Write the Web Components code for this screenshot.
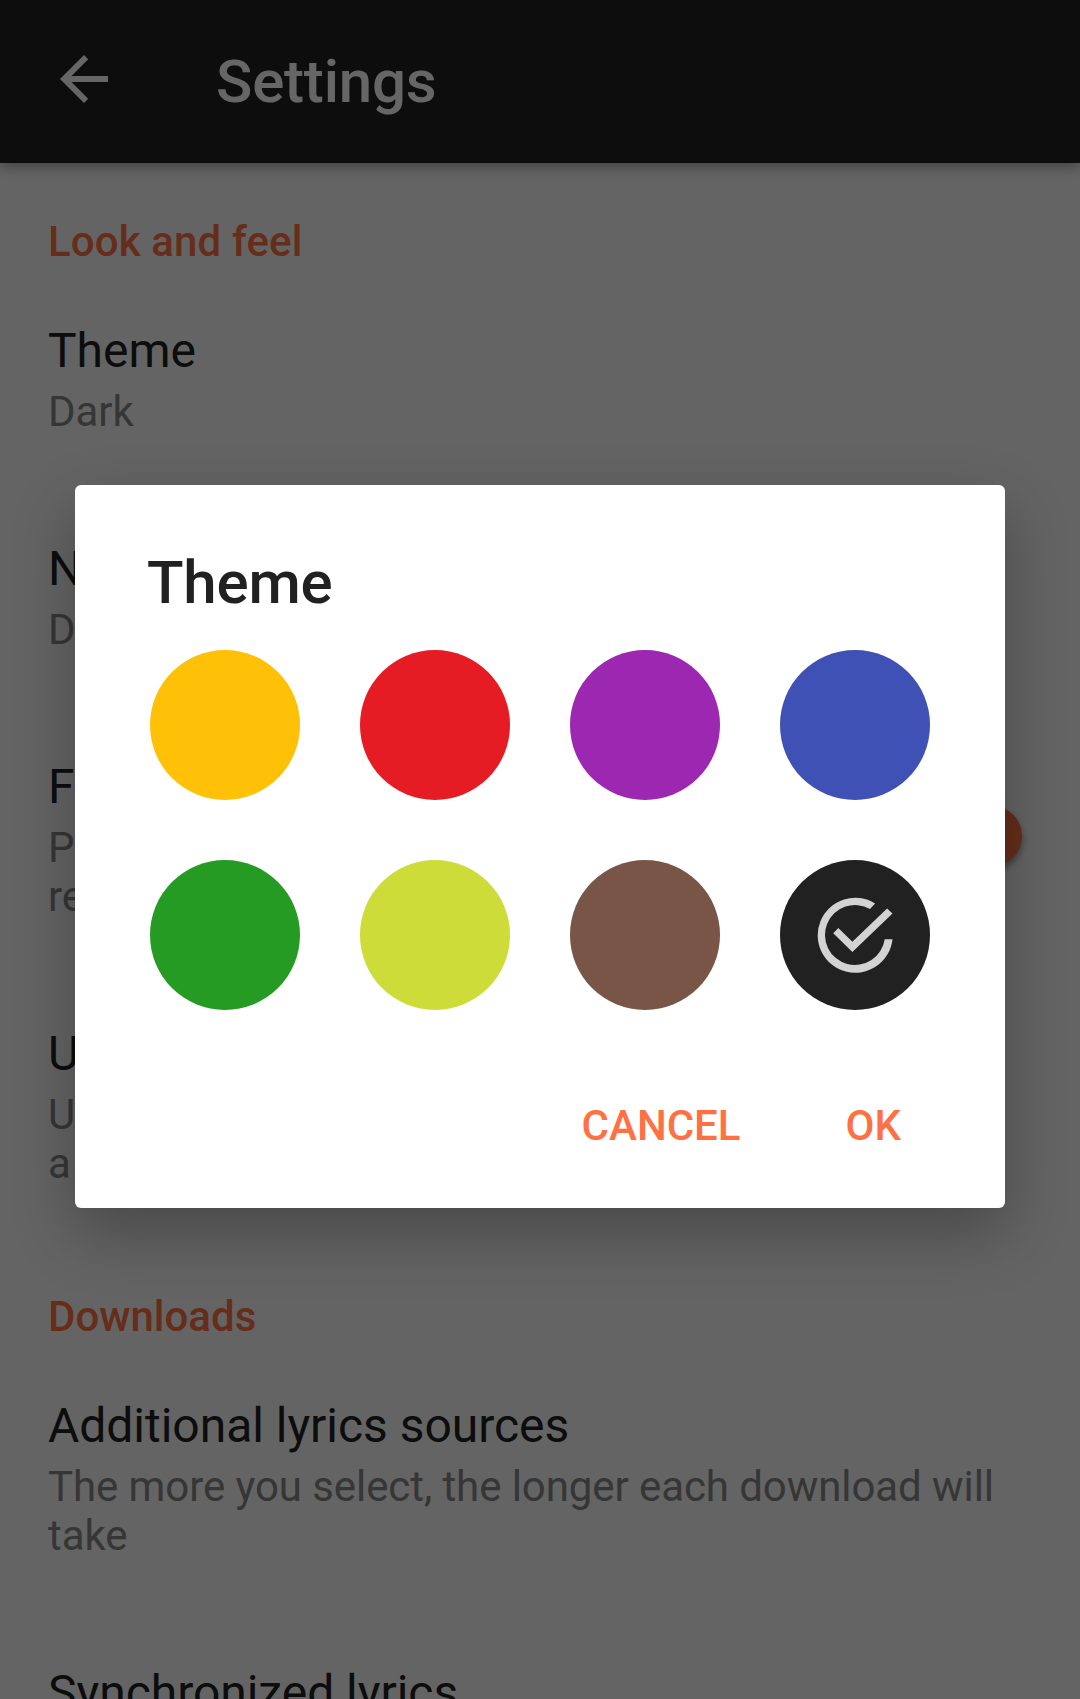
<!DOCTYPE html>
<html lang="en">
<head>
<meta charset="utf-8">
<title>Settings</title>
<style>
html,body{margin:0;height:1699px;overflow:hidden;background:#fafafa}
body{font-family:Roboto,"Noto Sans",sans-serif}
</style>
</head>
<body>
<settings-screen></settings-screen>
<script>
function define(name, html, setup) {
  customElements.define(name, class extends HTMLElement {
    constructor() {
      super();
      this.attachShadow({mode: 'open'}).innerHTML = html;
    }
    connectedCallback() { if (setup) setup(this, this.shadowRoot); }
  });
}

define('app-bar', `
<style>
:host{display:flex;align-items:center;box-sizing:border-box;height:163px;padding:0 48px;background:#212121;color:#fff;box-shadow:0 4px 13px rgba(0,0,0,.34);position:relative}
svg{width:72px;height:72px;margin-top:-5px;fill:#fff}
h1{margin:0 0 0 96px;font-size:60px;line-height:70px;font-weight:500;letter-spacing:-.2px}
</style>
<svg viewBox="0 0 24 24"><path d="M20 11H7.83l5.59-5.59L12 4l-8 8 8 8 1.41-1.41L7.83 13H20v-2z"/></svg>
<h1><slot></slot></h1>`);

define('section-title', `
<style>
:host{display:block;padding:52px 48px 4px;font-size:42px;line-height:49px;font-weight:500;color:#ff7043}
</style><slot></slot>`);

define('toggle-switch', `
<style>
:host{display:flex;align-items:center;justify-content:flex-end;width:102px;height:60px}
i{width:60px;height:60px;border-radius:50%;background:#ff7043;box-shadow:0 4px 7px rgba(0,0,0,.4)}
</style><i></i>`);

define('setting-item', `
<style>
:host{display:flex;align-items:center;padding:52px 40px 52px 48px}
.text{flex:1;min-width:0}
.title{font-size:48px;line-height:58px;color:#212121;white-space:nowrap;letter-spacing:-.03px}
.summary{display:block;margin-top:7px;font-size:42px;line-height:49px;color:#878787;letter-spacing:-.08px}
</style>
<div class="text"><div class="title"><slot></slot></div><div class="summary"><slot name="summary"></slot></div></div>
<slot name="widget"></slot>`);

define('color-swatch', `
<style>
:host{display:flex;align-items:center;justify-content:center;width:150px;height:150px;border-radius:50%;background:var(--c)}
svg{display:none;width:90px;height:90px;fill:#d3d3d3}
:host([selected]) svg{display:block}
</style>
<svg viewBox="0 0 24 24"><path d="M22 13.1A10 10 0 1 1 17.35 3.6L16 5.07A8 8 0 1 0 19.92 13.1ZM7.55 10.1 6.2 11.5 11.3 16.55 22 6.25 20.55 4.9 11.3 13.8Z"/></svg>`,
(el) => el.style.setProperty('--c', el.getAttribute('color')));

define('text-button', `
<style>
:host{display:block;font-size:42px;line-height:49px;font-weight:500;color:#ff7043}
</style><slot></slot>`);

define('color-dialog', `
<style>
:host{display:block;box-sizing:border-box;width:930px;height:723px;padding:66px 75px 0;border-radius:6px;background:#fff;box-shadow:0 25px 62px rgba(0,0,0,.28)}
h2{margin:0 0 0 -3px;font-size:60px;line-height:64px;height:99px;font-weight:500;color:#212121;letter-spacing:-.2px}
.grid{display:grid;grid-template-columns:repeat(4,150px);gap:60px}
.actions{display:flex;justify-content:flex-end;gap:105px;padding:91px 29px 0 0}
</style>
<h2><slot name="title"></slot></h2>
<div class="grid"><slot></slot></div>
<div class="actions"><slot name="actions"></slot></div>`);

define('settings-screen', `
<style>
:host{display:block;position:relative;width:1080px;height:1699px;overflow:hidden;background:#fafafa}
main{padding-top:2px}
.loose{letter-spacing:.13px}
toggle-switch{margin:0 18px 7px 0}
.scrim{position:absolute;inset:0;box-sizing:border-box;display:flex;justify-content:center;align-items:flex-start;padding-top:485px;background:rgba(0,0,0,.6)}
</style>
<app-bar>Settings</app-bar>
<main>
<section-title class="loose">Look and feel</section-title>
<setting-item>Theme<span slot="summary">Dark</span></setting-item>
<setting-item>N<span slot="summary">D</span></setting-item>
<setting-item>F<span slot="summary">P<br>re</span><toggle-switch slot="widget"></toggle-switch></setting-item>
<setting-item>U<span slot="summary">U<br>a</span></setting-item>
<section-title>Downloads</section-title>
<setting-item>Additional lyrics sources<span slot="summary">The more you select, the longer each download will take</span></setting-item>
<setting-item>Synchronized lyrics</setting-item>
</main>
<div class="scrim">
<color-dialog>
<span slot="title">Theme</span>
<color-swatch color="#ffc107"></color-swatch>
<color-swatch color="#e51c23"></color-swatch>
<color-swatch color="#9c27b0"></color-swatch>
<color-swatch color="#3f51b5"></color-swatch>
<color-swatch color="#259b24"></color-swatch>
<color-swatch color="#cddc39"></color-swatch>
<color-swatch color="#795548"></color-swatch>
<color-swatch color="#212121" selected></color-swatch>
<text-button slot="actions">CANCEL</text-button>
<text-button slot="actions">OK</text-button>
</color-dialog>
</div>`);
</script>
</body>
</html>
